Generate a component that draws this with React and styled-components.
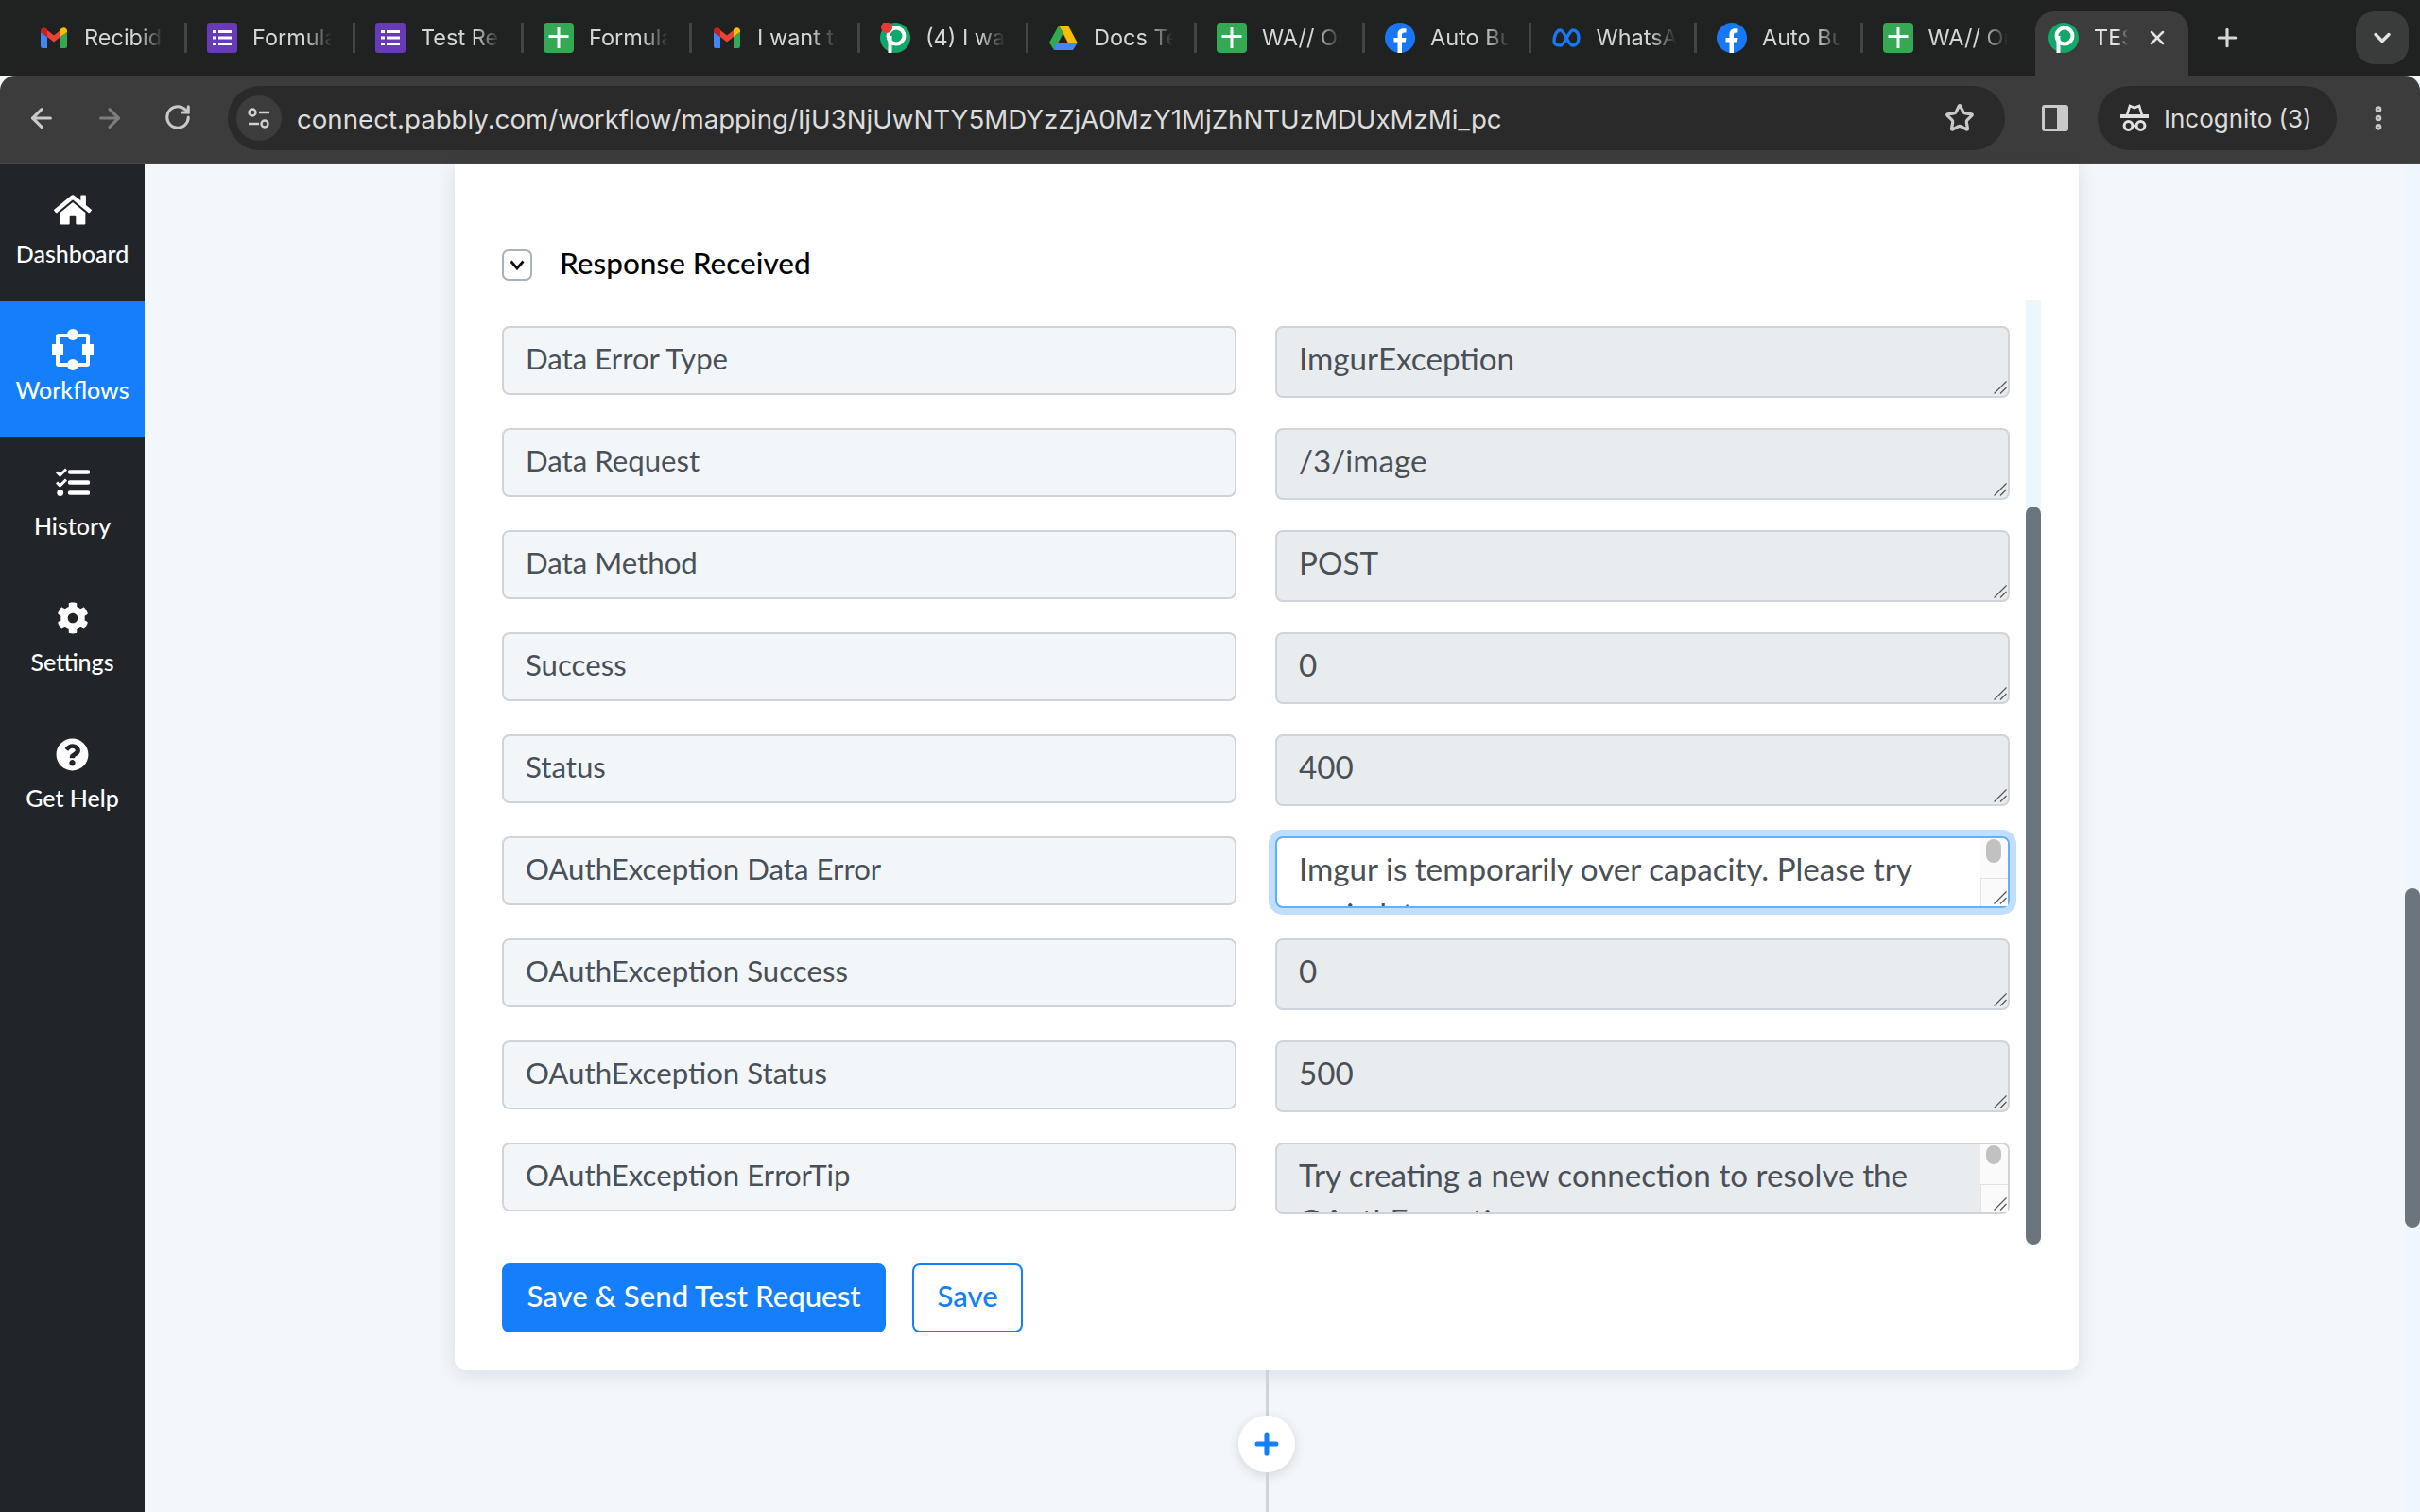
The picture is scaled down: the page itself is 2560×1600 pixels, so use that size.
import React from "react";
import styled, { createGlobalStyle, css } from "styled-components";
import { ArrowLeft, ArrowRight, RotateCw, Star, Plus, X, ChevronDown, MoreVertical } from "lucide-react";
import { FaHome, FaCog, FaQuestionCircle } from "react-icons/fa";

const GlobalStyle = createGlobalStyle`
  html, body { margin: 0; padding: 0; background: #f3f6fa; }
  * { box-sizing: border-box; }
`;

const Screen = styled.div`
  width: 2560px;
  height: 1600px;
  overflow: hidden;
  display: flex;
  flex-direction: column;
  font-family: Lato, "Open Sans", sans-serif;
`;

/* ---------- browser chrome ---------- */

const TabStrip = styled.div`
  height: 80px;
  background: #202221;
  display: flex;
  padding-left: 18px;
  font-family: Inter, Roboto, sans-serif;
  flex: none;
`;

const Tab = styled.div`
  width: 178px;
  height: 80px;
  padding: 24px 0 0 23px;
  display: flex;
  gap: 16px;
  position: relative;
  flex: none;
  &:nth-child(n + 9) {
    width: 175.5px;
  }
  ${(p) =>
    !p.$last &&
    css`
      &::after {
        content: "";
        position: absolute;
        right: -2px;
        top: 24px;
        width: 3px;
        height: 32px;
        background: #434544;
      }
    `}
`;

const TabTitle = styled.span`
  width: 84px;
  height: 32px;
  line-height: 32px;
  font-size: 23.5px;
  color: #d4d6d5;
  white-space: nowrap;
  overflow: hidden;
  mask-image: linear-gradient(to right, #000 68%, transparent 100%);
`;

const ActiveTab = styled.div`
  width: 162px;
  height: 68px;
  margin-top: 12px;
  margin-left: 9px;
  padding: 12px 0 0 14px;
  background: #3c3c3c;
  border-radius: 20px 20px 0 0;
  display: flex;
  gap: 16px;
  color: #e3e3e3;
  flex: none;
`;

const ActiveTitle = styled(TabTitle)`
  width: 36px;
  color: #e3e3e3;
`;

const TabClose = styled.span`
  margin-left: 3px;
  height: 32px;
  display: flex;
  align-items: center;
`;

const NewTab = styled.div`
  width: 40px;
  height: 68px;
  margin-top: 6px;
  margin-left: 21px;
  display: flex;
  align-items: center;
  justify-content: center;
  color: #d4d6d5;
  flex: none;
`;

const TabSearch = styled.div`
  width: 56px;
  height: 56px;
  margin: 12px 12px 0 auto;
  border-radius: 20px;
  background: #3a3b3b;
  display: flex;
  align-items: center;
  justify-content: center;
  color: #e3e3e3;
  flex: none;
`;

const Toolbar = styled.div`
  height: 94px;
  flex: none;
  background: #3c3c3c;
  border-top-left-radius: 16px;
  border-top-right-radius: 16px;
  border-bottom: 2px solid #474747;
  display: flex;
  align-items: center;
  padding: 0 0 2px 0;
  color: #c8c8c8;
  font-family: Inter, Roboto, sans-serif;
`;

const NavButton = styled.div`
  width: 72px;
  display: flex;
  justify-content: center;
  color: ${(p) => (p.$dim ? "#7d7d7d" : "#c9c9c9")};
`;

const NavGroup = styled.div`
  display: flex;
  padding-left: 8px;
  width: 241px;
`;

const AddressBar = styled.div`
  width: 1880px;
  height: 68px;
  border-radius: 34px;
  background: #2a2a2a;
  display: flex;
  align-items: center;
  padding-left: 9px;
  flex: none;
`;

const SiteInfo = styled.div`
  width: 48px;
  height: 48px;
  border-radius: 50%;
  background: #3c3c3c;
  display: flex;
  align-items: center;
  justify-content: center;
  flex: none;
`;

const Url = styled.div`
  margin-left: 16px;
  padding-top: 2px;
  font-size: 27.65px;
  color: #dcdcdc;
  white-space: nowrap;
  flex: 1;
`;

const StarButton = styled.div`
  margin-right: 32px;
  display: flex;
  color: #c9c9c9;
`;

const PanelButton = styled.div`
  width: 98px;
  padding-left: 8px;
  display: flex;
  justify-content: center;
`;

const IncognitoPill = styled.div`
  width: 253px;
  height: 68px;
  border-radius: 34px;
  background: #2a2a2a;
  display: flex;
  align-items: center;
  gap: 16px;
  padding-left: 24px;
  font-size: 26px;
  color: #dcdcdc;
  flex: none;
`;

const MenuButton = styled.div`
  width: 88px;
  display: flex;
  justify-content: center;
  color: #c9c9c9;
`;

/* ---------- page ---------- */

const Body = styled.div`
  flex: 1;
  display: flex;
  min-height: 0;
`;

const Sidebar = styled.nav`
  width: 153px;
  background: #212529;
  flex: none;
`;

const SideItem = styled.div`
  height: 144px;
  padding-top: 28px;
  display: flex;
  flex-direction: column;
  align-items: center;
  color: #fff;
  background: ${(p) => (p.$active ? "#157efb" : "transparent")};
`;

const SideIcon = styled.div`
  height: 40px;
  display: flex;
  align-items: center;
  justify-content: center;
`;

const SideLabel = styled.span`
  margin-top: 9px;
  font-size: 25px;
  line-height: 34px;
  font-weight: 500;
`;

const Main = styled.main`
  flex: 1;
  min-width: 0;
  background: #f3f6fa;
  padding-left: 328px;
`;

const Column = styled.div`
  width: 1718px;
  height: 100%;
  display: flex;
  flex-direction: column;
`;

const Card = styled.section`
  background: #fff;
  border-radius: 0 0 12px 12px;
  box-shadow: 0 4px 20px rgba(40, 60, 90, 0.13);
  padding: 90px 40px 40px 50px;
`;

const SectionHeader = styled.div`
  display: flex;
  align-items: center;
  height: 33px;
  gap: 29px;
  margin-bottom: 20px;
`;

const Toggle = styled.button`
  width: 32px;
  height: 33px;
  padding: 0;
  border: 2px solid #a9b1ba;
  border-radius: 7px;
  background: #fff;
  display: flex;
  align-items: center;
  justify-content: center;
  color: #111;
`;

const SectionTitle = styled.h3`
  margin: 0;
  padding-bottom: 5px;
  font-size: 31.5px;
  font-weight: 500;
  color: #000;
`;

const ScrollArea = styled.div`
  display: flex;
  height: 1000px;
`;

const Rows = styled.div`
  width: 1595px;
  padding-top: 28px;
  flex: none;
`;

const Row = styled.div`
  display: grid;
  grid-template-columns: 777px 777px;
  column-gap: 41px;
  align-items: start;
  margin-bottom: 32px;
`;

const fieldBase = css`
  font-family: Lato, "Open Sans", sans-serif;
  color: #495057;
  border: 2px solid #ced4da;
  border-radius: 8px;
  outline: none;
`;

const FieldName = styled.input`
  ${fieldBase}
  font-size: 31.2px;
  width: 777px;
  height: 73px;
  padding: 0 23px 5px;
  background: #f3f6f9;
`;

const FieldBox = styled.div`
  position: relative;
  width: 777px;
  height: 76px;
`;

const FieldValue = styled.textarea`
  ${fieldBase}
  font-size: 33.2px;
  display: block;
  width: 100%;
  height: 100%;
  padding: 8px ${(p) => (p.$scroll ? "52px" : "23px")} 0 23px;
  line-height: 48px;
  background: #e9ecef;
  resize: none;
  overflow: hidden;
  ${(p) =>
    p.$focused &&
    css`
      background: #fff;
      border-color: #62aeff;
      box-shadow: 0 0 0 7px #c0defe;
    `}
`;

const Gutter = styled.div`
  position: absolute;
  top: 2px;
  right: 2px;
  bottom: 2px;
  width: 29px;
  background: #fafafa;
  border-top-right-radius: 6px;
`;

const GutterThumb = styled.div`
  width: 16px;
  height: ${(p) => p.$height}px;
  margin: 1px 0 0 6px;
  border-radius: 8px;
  background: #c1c1c1;
`;

const GutterCorner = styled.div`
  position: absolute;
  left: 0;
  right: 0;
  bottom: 0;
  height: 30px;
  border-top: 1px solid #e2e2e2;
  border-left: 1px solid #e2e2e2;
`;

const Grip = styled.svg`
  position: absolute;
  right: 3px;
  bottom: 4px;
`;

const ScrollTrack = styled.div`
  width: 16px;
  margin-left: 17px;
  height: 1000px;
  background: #eef6fd;
  padding-top: 219px;
  flex: none;
`;

const ScrollThumb = styled.div`
  height: 781px;
  border-radius: 8px;
  background: #6c757d;
`;

const Actions = styled.div`
  display: flex;
  gap: 28px;
  margin-top: 20px;
`;

const Button = styled.button`
  height: 73px;
  padding: 0 24.5px 6px;
  font-family: Lato, "Open Sans", sans-serif;
  font-size: 31.2px;
  font-weight: 500;
  border: 2px solid #157efb;
  border-radius: 8px;
  color: ${(p) => (p.$primary ? "#fff" : "#157efb")};
  background: ${(p) => (p.$primary ? "#157efb" : "#fff")};
`;

const Connector = styled.div`
  flex: 1;
  display: flex;
  flex-direction: column;
  align-items: center;
`;

const ConnectorLine = styled.div`
  width: 3px;
  background: #ced4da;
  height: ${(p) => p.$height};
`;

const AddStep = styled.div`
  width: 60px;
  height: 60px;
  border-radius: 50%;
  background: #fff;
  box-shadow: 0 3px 12px rgba(40, 60, 90, 0.16);
  display: flex;
  align-items: center;
  justify-content: center;
  color: #157efb;
  flex: none;
`;

const PageScroll = styled.div`
  width: 16px;
  flex: none;
  background: #eff6fd;
  padding-top: 766px;
`;

const PageThumb = styled.div`
  height: 359px;
  border-radius: 8px;
  background: #6c757d;
`;

/* ---------- favicons ---------- */

const Gmail = () => (
  <svg width="32" height="32" viewBox="0 0 32 32">
    <path d="M2 10v15a2 2 0 0 0 2 2h5V15z" fill="#4285f4" />
    <path d="M30 10v15a2 2 0 0 1-2 2h-5V15z" fill="#34a853" />
    <path d="M9 8 16 13.500 23 8v7L16 20.500 9 15z" fill="#ea4335" />
    <path d="M2 8.500C2 5.500 5.500 4 8 6.200L9 7v8L2 10z" fill="#c5221f" />
    <path d="M30 8.500C30 5.500 26.500 4 24 6.200L23 7v8l7-5z" fill="#fbbc04" />
  </svg>
);

const Forms = () => (
  <svg width="32" height="32" viewBox="0 0 32 32">
    <rect width="32" height="32" rx="3" fill="#673ab7" />
    <path d="M6 8h4v3H6zM12 8h14v3H12zM6 14.500h4v3H6zM12 14.500h14v3H12zM6 21h4v3H6zM12 21h14v3H12z" fill="#fff" />
  </svg>
);

const Sheets = () => (
  <svg width="32" height="32" viewBox="0 0 32 32">
    <rect width="32" height="32" rx="4" fill="#34a853" />
    <path d="M14.500 5h3v8h9v3h-9v11h-3V16h-9v-3h9z" fill="#fff" />
  </svg>
);

const Pabbly = ({ dot }) => (
  <svg width="32" height="32" viewBox="0 0 32 32">
    <circle cx="16" cy="16" r="16" fill="#14a76c" />
    <circle cx="17" cy="14" r="8.500" fill="none" stroke="#fff" strokeWidth="4" />
    <path d="M8.500 14v18h4V14z" fill="#fff" />
    {dot && <circle cx="7" cy="5" r="6" fill="#e53935" />}
  </svg>
);

const Drive = () => (
  <svg width="32" height="32" viewBox="0 0 32 32">
    <path d="M11 3h10l10 19H21z" fill="#fbbc04" />
    <path d="M11 3 1 21l5 8 10-18z" fill="#34a853" />
    <path d="M9 21h22l-5 8H6z" fill="#4285f4" />
    <path d="M11 21h10l-5-10z" fill="#1a1d1c" opacity="0.25" />
  </svg>
);

const Facebook = () => (
  <svg width="32" height="32" viewBox="0 0 32 32">
    <circle cx="16" cy="16" r="16" fill="#1877f2" />
    <path d="M13.500 32V20.500H9.500V16h4v-3.500c0-4 2.400-6.200 6-6.200 1.700 0 3 .2 3 .2v4h-2c-2 0-2.500 1.200-2.500 2.500v3h4.500l-.7 4.500H18V32z" fill="#fff" />
  </svg>
);

const Meta = () => (
  <svg width="32" height="32" viewBox="0 0 32 32" fill="none">
    <path d="M3 20c0-7 3-12 6.500-12 5 0 8 16 13 16 3 0 6.500-2 6.500-8 0-5-2.500-8-6-8-5 0-8 16-13.500 16C5.500 24 3 23 3 20z" stroke="#1877f2" strokeWidth="3.400" />
  </svg>
);

const TabList = [
  ["Recibidos", Gmail],
  ["Formulario", Forms],
  ["Test Response", Forms],
  ["Formulario", Sheets],
  ["I want to", Gmail],
  ["(4) I want", () => <Pabbly dot />],
  ["Docs Template", Drive],
  ["WA// Order", Sheets],
  ["Auto Bump", Facebook],
  ["WhatsApp", Meta],
  ["Auto Bump", Facebook],
  ["WA// Order", Sheets],
];

/* ---------- small drawn icons ---------- */

const SiteControls = () => (
  <svg width="26" height="26" viewBox="0 0 26 26" fill="none" stroke="#d0d0d0" strokeWidth="2.400">
    <circle cx="6" cy="7" r="3.500" />
    <path d="M13 7h11M2 19h11" />
    <circle cx="19" cy="19" r="3.500" />
  </svg>
);

const SidePanel = () => (
  <svg width="30" height="30" viewBox="0 0 30 30">
    <rect x="1" y="1" width="28" height="28" rx="3" fill="#c9c9c9" />
    <rect x="4" y="4" width="13" height="22" fill="#3c3c3c" />
  </svg>
);

const Incognito = () => (
  <svg width="30" height="30" viewBox="0 0 30 30" fill="none" stroke="#e0e0e0" strokeWidth="2.600">
    <path d="M7 12 10 2l5 2 5-2 3 10" />
    <path d="M0 13h30" strokeWidth="4" />
    <circle cx="8.500" cy="23" r="4.400" strokeWidth="3" />
    <circle cx="21.500" cy="23" r="4.400" strokeWidth="3" />
    <path d="M13 23h4" />
  </svg>
);

const WorkflowGlyph = styled.svg`
  margin-top: 8px;
`;

const Workflow = () => (
  <WorkflowGlyph width="44" height="44" viewBox="0 0 44 44" fill="#fff">
    <rect x="6" y="7" width="32" height="31" rx="1" fill="none" stroke="#fff" strokeWidth="4" />
    <circle cx="22" cy="6" r="6" />
    <circle cx="22" cy="38" r="6" />
    <rect x="0" y="16" width="12" height="12" />
    <rect x="32" y="16" width="12" height="12" />
  </WorkflowGlyph>
);

const HistoryIcon = () => (
  <svg width="36" height="30" viewBox="0 0 36 30" fill="none" stroke="#fff">
    <path d="M1 4.500l3.500 3.500 6.500-6.500M1 15.500l3.500 3.500 6.500-6.500" strokeWidth="3" />
    <path d="M15 4.500h19M15 15.500h19M15 26.500h19" strokeWidth="4.400" strokeLinecap="round" />
    <circle cx="4.700" cy="26.500" r="3.400" fill="#fff" stroke="none" />
  </svg>
);

const Chevron = () => (
  <svg width="16" height="11" viewBox="0 0 16 11" fill="none" stroke="currentColor" strokeWidth="2.800">
    <path d="M1.500 1.500 8 9l6.500-7.500" />
  </svg>
);

const ResizeGrip = () => (
  <Grip width="14" height="14" viewBox="0 0 14 14" fill="none" stroke="#555" strokeWidth="1.200">
    <path d="M.5 13.500 13.500.5M7 13.500l6.500-6.500" />
  </Grip>
);

/* ---------- data ---------- */

const sideItems = [
  { label: "Dashboard", icon: <FaHome size={40} /> },
  { label: "Workflows", icon: <Workflow />, active: true },
  { label: "History", icon: <HistoryIcon /> },
  { label: "Settings", icon: <FaCog size={34} /> },
  { label: "Get Help", icon: <FaQuestionCircle size={35} /> },
];

const fields = [
  { name: "Data Error Type", value: "ImgurException" },
  { name: "Data Request", value: "/3/image" },
  { name: "Data Method", value: "POST" },
  { name: "Success", value: "0" },
  { name: "Status", value: "400" },
  {
    name: "OAuthException Data Error",
    value: "Imgur is temporarily over capacity. Please try again later.",
    thumb: 25,
    focused: true,
  },
  { name: "OAuthException Success", value: "0" },
  { name: "OAuthException Status", value: "500" },
  {
    name: "OAuthException ErrorTip",
    value: "Try creating a new connection to resolve the OAuthException error.",
    thumb: 20,
  },
];

export default function App() {
  return (
    <Screen>
      <GlobalStyle />
      <TabStrip>
        {TabList.map(([title, Icon], i) => (
          <Tab key={i} $last={i === TabList.length - 1}>
            <Icon />
            <TabTitle>{title}</TabTitle>
          </Tab>
        ))}
        <ActiveTab>
          <Pabbly />
          <ActiveTitle>TEST</ActiveTitle>
          <TabClose>
            <X size={24} strokeWidth={2.5} />
          </TabClose>
        </ActiveTab>
        <NewTab>
          <Plus size={30} strokeWidth={2.5} />
        </NewTab>
        <TabSearch>
          <ChevronDown size={28} strokeWidth={3} />
        </TabSearch>
      </TabStrip>
      <Toolbar>
        <NavGroup>
          <NavButton>
            <ArrowLeft size={32} strokeWidth={2.4} />
          </NavButton>
          <NavButton $dim>
            <ArrowRight size={32} strokeWidth={2.4} />
          </NavButton>
          <NavButton>
            <RotateCw size={30} strokeWidth={2.4} />
          </NavButton>
        </NavGroup>
        <AddressBar>
          <SiteInfo>
            <SiteControls />
          </SiteInfo>
          <Url>connect.pabbly.com/workflow/mapping/IjU3NjUwNTY5MDYzZjA0MzY1MjZhNTUzMDUxMzMi_pc</Url>
          <StarButton>
            <Star size={32} strokeWidth={2.4} />
          </StarButton>
        </AddressBar>
        <PanelButton>
          <SidePanel />
        </PanelButton>
        <IncognitoPill>
          <Incognito />
          Incognito (3)
        </IncognitoPill>
        <MenuButton>
          <MoreVertical size={32} strokeWidth={3} />
        </MenuButton>
      </Toolbar>
      <Body>
        <Sidebar>
          {sideItems.map((item) => (
            <SideItem key={item.label} $active={item.active}>
              <SideIcon>{item.icon}</SideIcon>
              <SideLabel>{item.label}</SideLabel>
            </SideItem>
          ))}
        </Sidebar>
        <Main>
          <Column>
            <Card>
              <SectionHeader>
                <Toggle>
                  <Chevron />
                </Toggle>
                <SectionTitle>Response Received</SectionTitle>
              </SectionHeader>
              <ScrollArea>
                <Rows>
                  {fields.map((f) => (
                    <Row key={f.name}>
                      <FieldName readOnly value={f.name} />
                      <FieldBox>
                        <FieldValue readOnly value={f.value} $scroll={!!f.thumb} $focused={f.focused} />
                        {f.thumb && (
                          <Gutter>
                            <GutterThumb $height={f.thumb} />
                            <GutterCorner />
                          </Gutter>
                        )}
                        <ResizeGrip />
                      </FieldBox>
                    </Row>
                  ))}
                </Rows>
                <ScrollTrack>
                  <ScrollThumb />
                </ScrollTrack>
              </ScrollArea>
              <Actions>
                <Button $primary>Save &amp; Send Test Request</Button>
                <Button>Save</Button>
              </Actions>
            </Card>
            <Connector>
              <ConnectorLine $height="48px" />
              <AddStep>
                <Plus size={34} strokeWidth={3.6} />
              </AddStep>
              <ConnectorLine $height="60px" />
            </Connector>
          </Column>
        </Main>
        <PageScroll>
          <PageThumb />
        </PageScroll>
      </Body>
    </Screen>
  );
}
